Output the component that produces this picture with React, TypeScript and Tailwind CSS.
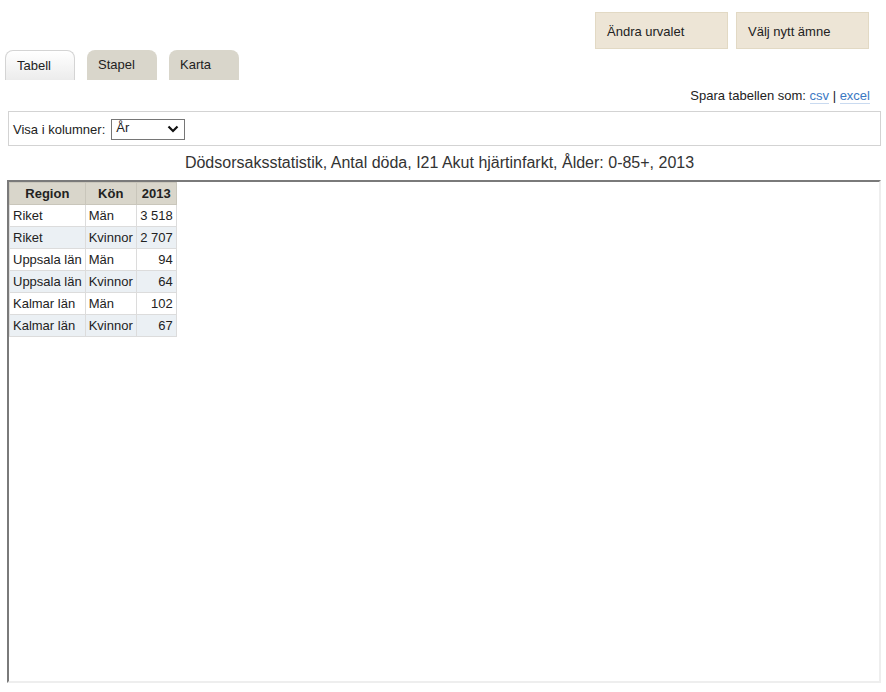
const rows = [
  { region: "Riket", kon: "Män", value: "3 518" },
  { region: "Riket", kon: "Kvinnor", value: "2 707" },
  { region: "Uppsala län", kon: "Män", value: "94" },
  { region: "Uppsala län", kon: "Kvinnor", value: "64" },
  { region: "Kalmar län", kon: "Män", value: "102" },
  { region: "Kalmar län", kon: "Kvinnor", value: "67" },
];

export default function App() {
  return (
    <div
      className="w-[886px] h-[692px] bg-white text-[13px] text-[#222] overflow-hidden"
      style={{ fontFamily: '"Liberation Sans", Arial, sans-serif' }}
    >
      {/* Top buttons */}
      <div className="flex justify-end gap-2 pt-3 pr-[17px]">
        <div className="w-[133px] h-[37px] flex items-center pl-[11px] pt-[2px] bg-[#ede5d6] border border-[#e2d9c4]">
          Ändra urvalet
        </div>
        <div className="w-[133px] h-[37px] flex items-center pl-[11px] pt-[2px] bg-[#ede5d6] border border-[#e2d9c4]">
          Välj nytt ämne
        </div>
      </div>

      {/* Tabs */}
      <div className="flex gap-3 pl-[5px] mt-px">
        <div className="w-[70px] h-[30px] flex items-center pl-[11px] rounded-t-[8px] border border-b-0 border-[#d4d4d4] bg-gradient-to-b from-white to-[#ececec]">
          Tabell
        </div>
        <div className="w-[70px] h-[30px] flex items-center pl-[11px] rounded-t-[8px] bg-[#d9d6cb]">
          Stapel
        </div>
        <div className="w-[70px] h-[30px] flex items-center pl-[11px] rounded-t-[8px] bg-[#d9d6cb]">
          Karta
        </div>
      </div>

      {/* Save links */}
      <div className="flex justify-end pr-[16px] mt-[8px] h-[16px] items-center">
        <span>Spara tabellen som:&nbsp;</span>
        <span className="text-[#3a78c3] border-b border-[#c9daf0] leading-[14px]">csv</span>
        <span>&nbsp;|&nbsp;</span>
        <span className="text-[#3a78c3] border-b border-[#c9daf0] leading-[14px]">excel</span>
      </div>

      {/* Column selector */}
      <div className="ml-[8px] mr-[5px] mt-[7px] h-[35px] border border-[#d3d3d3] flex items-center pl-[4px] pt-[2px]">
        <span>Visa i kolumner:</span>
        <div className="ml-[6px] w-[74px] h-[21px] border border-[#767676] flex items-center justify-between pl-[4px] pr-[5px] -mt-[1px]">
          <span className="-mt-[3px]">År</span>
          <svg width="12" height="8" viewBox="0 0 12 8">
            <path d="M1.5 1.5 L6 6 L10.5 1.5" fill="none" stroke="#111" strokeWidth="2.2" />
          </svg>
        </div>
      </div>

      {/* Title */}
      <div className="ml-[8px] mr-[5px] pr-[10px] h-[34px] flex items-center justify-center text-[16px] text-[#333]">
        Dödsorsaksstatistik, Antal döda, I21 Akut hjärtinfarkt, Ålder: 0-85+, 2013
      </div>

      {/* Table frame */}
      <div className="ml-[7px] w-[874px] h-[503px] border-2 border-t-[#7a7a7a] border-l-[#7a7a7a] border-r-[#eeeeee] border-b-[#eeeeee]">
        <table className="border-collapse">
          <thead>
            <tr className="h-[22px] bg-[#d9d6cb]">
              <th className="w-[74px] border border-[#c9c6bb] font-bold text-center px-[3px]">Region</th>
              <th className="w-[51px] border border-[#c9c6bb] font-bold text-center px-[3px]">Kön</th>
              <th className="w-[40px] border border-[#c9c6bb] font-bold text-center px-[3px]">2013</th>
            </tr>
          </thead>
          <tbody>
            {rows.map((r, i) => (
              <tr key={i} className={i % 2 === 0 ? "h-[22px] bg-white" : "h-[22px] bg-[#ebf0f4]"}>
                <td className="border border-[#dcdcdc] px-[3px] whitespace-nowrap">{r.region}</td>
                <td className="border border-[#dcdcdc] px-[3px] whitespace-nowrap">{r.kon}</td>
                <td className="border border-[#dcdcdc] px-[3px] text-right whitespace-nowrap">{r.value}</td>
              </tr>
            ))}
          </tbody>
        </table>
      </div>
    </div>
  );
}
